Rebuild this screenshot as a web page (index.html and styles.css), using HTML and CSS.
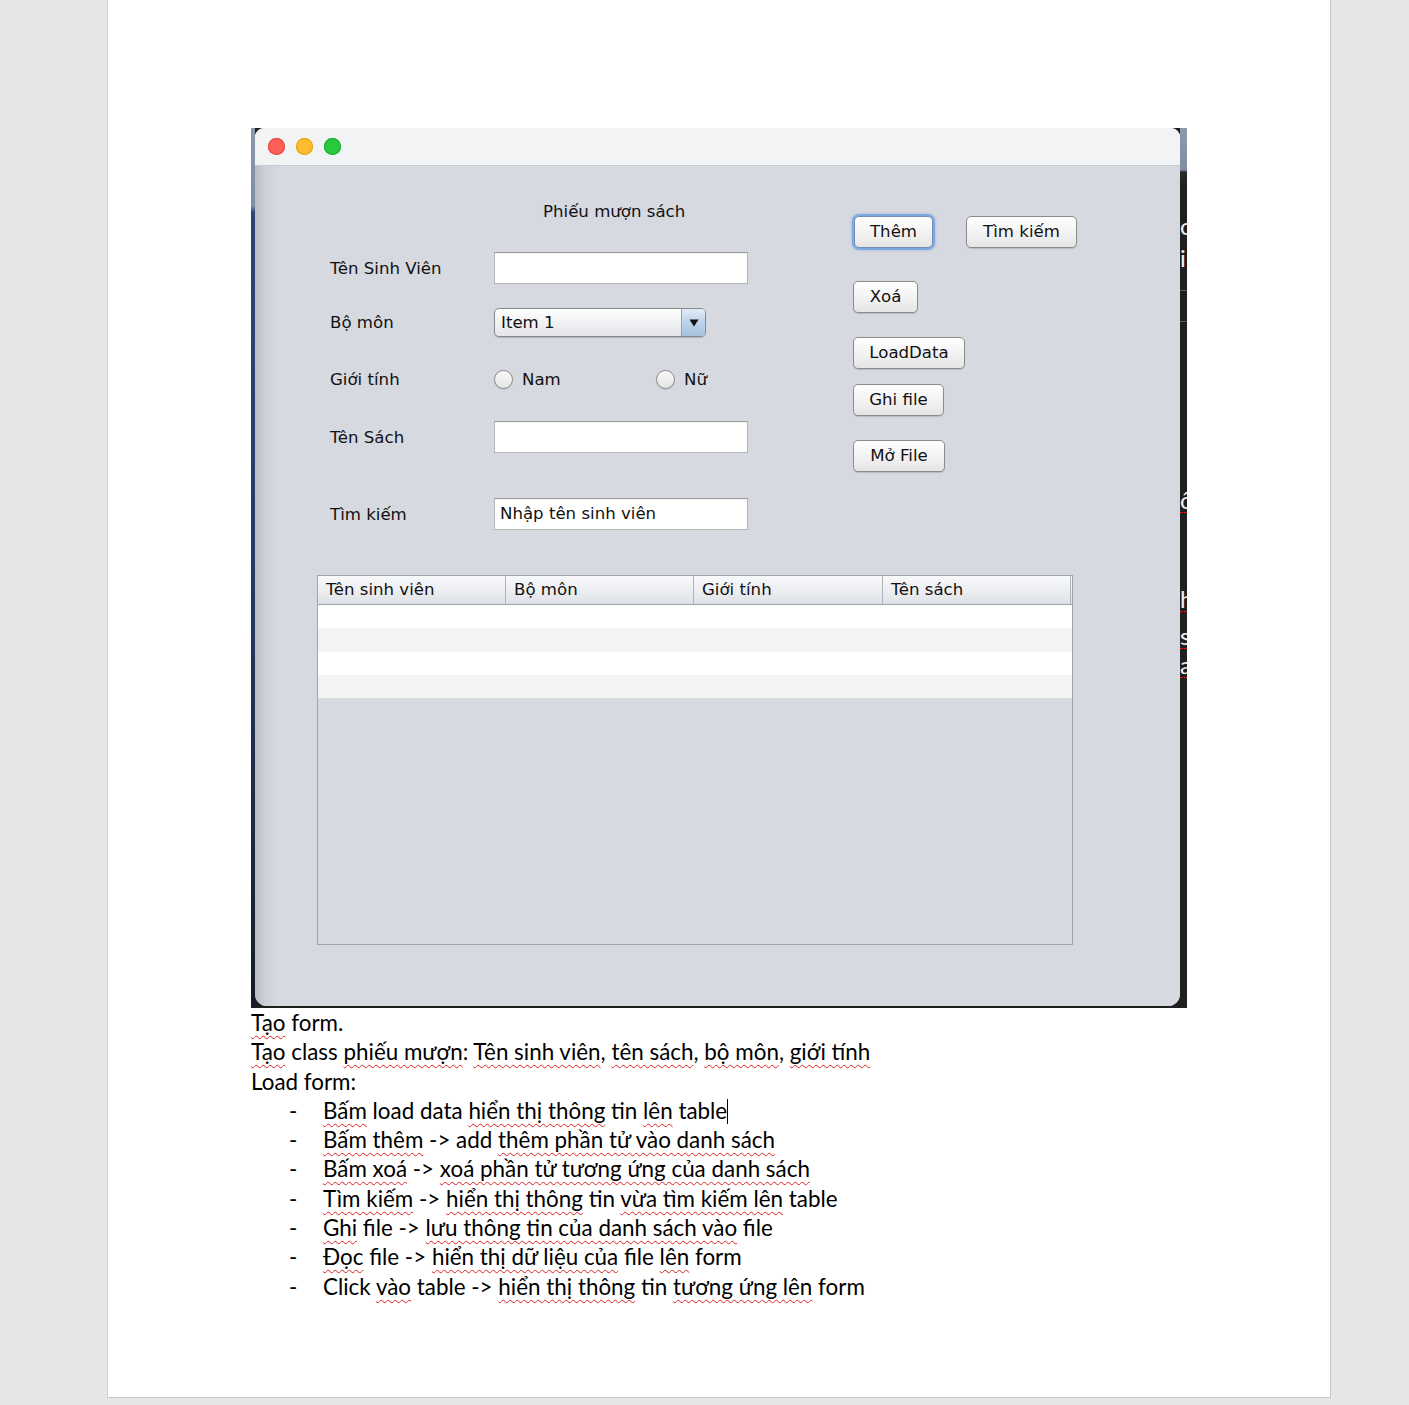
FILE: index.html
```html
<!DOCTYPE html>
<html lang="vi">
<head>
<meta charset="utf-8">
<title>Phiếu mượn sách</title>
<link rel="stylesheet" href="styles.css">
</head>
<body>
<div class="page">
  <div class="shot">
    <div class="desk-left"></div>
    <div class="window">
      <div class="titlebar">
        <span class="tl tl-red"></span><span class="tl tl-yellow"></span><span class="tl tl-green"></span>
      </div>
      <div class="content">
        <div class="top">
          <div class="form">
            <div class="title">Phiếu mượn sách</div>
            <div class="row r1"><span class="label">Tên Sinh Viên</span><div class="field"></div></div>
            <div class="row r2"><span class="label">Bộ môn</span>
              <div class="combo"><span class="combo-text">Item 1</span><span class="combo-arrow"><svg width="10" height="8" viewBox="0 0 10 8"><path d="M0.5 0.5 L9.5 0.5 L5 7.5 Z" fill="#111"/></svg></span></div>
            </div>
            <div class="row r3"><span class="label">Giới tính</span>
              <div class="radios"><span class="radio radio-nam"><span class="dot"></span>Nam</span><span class="radio"><span class="dot"></span>Nữ</span></div>
            </div>
            <div class="row r4"><span class="label">Tên Sách</span><div class="field"></div></div>
            <div class="row r5"><span class="label">Tìm kiếm</span><div class="field">Nhập tên sinh viên</div></div>
          </div>
          <div class="buttons">
            <div class="btn-row"><span class="btn focus w-them">Thêm</span><span class="btn w-tim">Tìm kiếm</span></div>
            <div class="btn-row m-xoa"><span class="btn w-xoa">Xoá</span></div>
            <div class="btn-row m-load"><span class="btn w-load">LoadData</span></div>
            <div class="btn-row m-ghi"><span class="btn w-ghi">Ghi file</span></div>
            <div class="btn-row m-mo"><span class="btn w-mo">Mở File</span></div>
          </div>
        </div>
        <div class="table">
          <div class="thead">
            <span class="th">Tên sinh viên</span><span class="th">Bộ môn</span><span class="th">Giới tính</span><span class="th">Tên sách</span>
          </div>
          <div class="trow h23"></div>
          <div class="trow alt h24"></div>
          <div class="trow h23"></div>
          <div class="trow alt h23"></div>
        </div>
      </div>
    </div>
    <div class="desk-right">
      <span class="frag f1">o</span>
      <span class="frag f2">i</span>
      <span class="bar b1"></span>
      <span class="bar b2"></span>
      <span class="frag f3">ô</span>
      <span class="frag f4">h</span>
      <span class="frag f5">s</span>
      <span class="frag f6">a</span>
    </div>
  </div>
  <div class="notes">
    <p><span class="sp">Tạo</span> form.</p>
    <p><span class="sp">Tạo</span> class <span class="sp">phiếu mượn</span>: <span class="sp">Tên sinh viên</span>, <span class="sp">tên sách</span>, <span class="sp">bộ môn</span>, <span class="sp">giới tính</span></p>
    <p>Load form:</p>
    <ul class="list">
      <li><span class="dash">-</span><span><span class="sp">Bấm</span> load data <span class="sp">hiển thị thông</span> tin <span class="sp">lên</span> table<span class="caret"></span></span></li>
      <li><span class="dash">-</span><span><span class="sp">Bấm thêm</span> -&gt; add <span class="sp">thêm phần tử vào danh sách</span></span></li>
      <li><span class="dash">-</span><span><span class="sp">Bấm xoá</span> -&gt; <span class="sp">xoá phần tử tương ứng của danh sách</span></span></li>
      <li><span class="dash">-</span><span><span class="sp">Tìm kiếm</span> -&gt; <span class="sp">hiển thị thông</span> tin <span class="sp">vừa tìm kiếm lên</span> table</span></li>
      <li><span class="dash">-</span><span><span class="sp">Ghi</span> file -&gt; <span class="sp">lưu thông tin của danh sách vào</span> file</span></li>
      <li><span class="dash">-</span><span><span class="sp">Đọc</span> file -&gt; <span class="sp">hiển thị dữ liệu của</span> file <span class="sp">lên</span> form</span></li>
      <li><span class="dash">-</span><span>Click <span class="sp">vào</span> table -&gt; <span class="sp">hiển thị thông</span> tin <span class="sp">tương ứng lên</span> form</span></li>
    </ul>
  </div>
</div>
</body>
</html>
```
FILE: styles.css
```css
html, body {
  margin: 0;
  padding: 0;
}
body {
  background: #e6e6e6;
  font-family: "DejaVu Sans", sans-serif;
  color: #000;
}
.page {
  box-sizing: border-box;
  margin-left: 107px;
  width: 1224px;
  height: 1398px;
  background: #fff;
  border-left: 1px solid #d0d0d0;
  border-right: 1px solid #c4c4c4;
  border-bottom: 1px solid #c4c4c4;
  padding-top: 128px;
  padding-left: 143px;
}

/* screenshot */
.shot {
  display: flex;
  width: 936px;
  height: 880px;
  background: #1f1f1f;
}
.desk-left {
  width: 4px;
  background: linear-gradient(to bottom, #8898ab 0, #7e90a6 78px, #2e4574 84px, #263b66 420px, #1d2a44 700px, #161b26 100%);
}
.window {
  width: 925px;
  height: 878px;
  background: #d6d9e0;
  border-radius: 9px 9px 12px 12px;
  overflow: hidden;
  display: flex;
  flex-direction: column;
  font-size: 16.6px;
  color: #111;
}
.titlebar {
  height: 37px;
  background: #f2f3f5;
  border-bottom: 1px solid #c7c9cd;
  display: flex;
  align-items: center;
  padding-left: 13px;
  gap: 11px;
}
.tl {
  width: 17px;
  height: 17px;
  border-radius: 50%;
}
.tl-red { background: #fe5f57; box-shadow: inset 0 0 0 1px #e2463f; }
.tl-yellow { background: #febc2e; box-shadow: inset 0 0 0 1px #e1a116; }
.tl-green { background: #28c840; box-shadow: inset 0 0 0 1px #1aab29; }

.content {
  flex: 1;
  padding-left: 62px;
  background: linear-gradient(to right, #b9bdc7 0, #ccd0d8 10px, #d6d9e0 24px);
}
.top {
  display: flex;
}
.form {
  width: 535px;
  padding-top: 36px;
}
.title {
  padding-left: 226px;
  height: 20px;
  line-height: 20px;
}
.row {
  display: flex;
  align-items: center;
  padding-left: 13px;
}
.label {
  width: 164px;
}
.r1 { margin-top: 30px; height: 32px; }
.r2 { margin-top: 24px; height: 29px; }
.r3 { margin-top: 31px; height: 22px; }
.r4 { margin-top: 31px; height: 32px; }
.r5 { margin-top: 45px; height: 32px; }

.field {
  box-sizing: border-box;
  width: 254px;
  height: 32px;
  background: #fff;
  border: 1px solid #b5b5b5;
  border-top-color: #9c9c9c;
  box-shadow: inset 0 1px 1px rgba(0,0,0,0.06);
  padding-left: 5px;
  line-height: 30px;
}
.combo {
  box-sizing: border-box;
  width: 212px;
  height: 29px;
  display: flex;
  border: 1px solid #8a8a8a;
  border-radius: 5px;
  overflow: hidden;
  background: linear-gradient(#ffffff, #f1f2f4 50%, #e3e5e9);
  box-shadow: 0 1px 1px rgba(0,0,0,0.18);
}
.combo-text {
  padding-left: 6px;
  line-height: 27px;
}
.combo-arrow {
  margin-left: auto;
  width: 23px;
  border-left: 1px solid #8ba3bd;
  background: linear-gradient(#e2ecf7, #bcd2e8 50%, #a7c1dd);
  display: flex;
  align-items: center;
  justify-content: center;
}
.radios {
  display: flex;
  align-items: center;
}
.radio {
  display: flex;
  align-items: center;
}
.radio-nam {
  width: 162px;
}
.dot {
  box-sizing: border-box;
  width: 19px;
  height: 19px;
  border-radius: 50%;
  border: 1px solid #8c8c8c;
  background: linear-gradient(#fafafa, #e4e4e4);
  box-shadow: 0 1px 1px rgba(0,0,0,0.12);
  margin-right: 9px;
}

/* buttons */
.buttons {
  padding-top: 50px;
  margin-left: 1px;
}
.btn-row {
  display: flex;
}
.btn {
  box-sizing: border-box;
  height: 32px;
  line-height: 30px;
  text-align: center;
  border: 1px solid #8b8b8b;
  border-radius: 5px;
  background: linear-gradient(#ffffff, #f3f3f3 50%, #e5e5e5);
  box-shadow: 0 1px 1px rgba(0,0,0,0.15);
}
.btn.focus {
  margin-left: 1px;
  border-color: #6f8fb6;
  box-shadow: 0 0 0 2px #7eaadd, 0 0 3px 2px rgba(90,150,220,0.5);
}
.w-them { width: 79px; }
.w-tim { width: 111px; margin-left: 33px; }
.w-xoa { width: 65px; }
.w-load { width: 112px; }
.w-ghi { width: 91px; }
.w-mo { width: 92px; }
.m-xoa { margin-top: 33px; }
.m-load { margin-top: 24px; }
.m-ghi { margin-top: 15px; }
.m-mo { margin-top: 24px; }

/* table */
.table {
  box-sizing: border-box;
  margin-top: 45px;
  width: 756px;
  height: 370px;
  border: 1px solid #a2a4aa;
}
.thead {
  display: grid;
  grid-template-columns: 188px 188px 189px 188px;
  height: 28px;
  border-bottom: 1px solid #9fa2a9;
  background: linear-gradient(#f8f9fb, #eceef1 55%, #dde0e5);
}
.th {
  border-right: 1px solid #b1b4ba;
  padding-left: 8px;
  line-height: 28px;
}
.trow { background: #fff; }
.trow.alt { background: #f3f3f2; }
.h23 { height: 23px; }
.h24 { height: 24px; }

/* right desktop strip */
.desk-right {
  width: 7px;
  overflow: hidden;
  display: flex;
  flex-direction: column;
  background: linear-gradient(to bottom, #8b9aab 0, #7f8fa2 42px, #2a2a2a 44px, #1f1f1f 60px);
  color: #f2f2f2;
  font-family: "Lato", sans-serif;
  font-size: 24px;
  line-height: 24px;
}
.frag { display: block; white-space: nowrap; }
.f1 { margin-top: 86px; }
.f2 { margin-top: 8px; }
.bar { display: block; height: 1px; background: #5a5a5a; }
.b1 { margin-top: 20px; }
.b2 { margin-top: 30px; }
.f3 { margin-top: 166px; border-bottom: 1px dotted #e33; }
.f4 { margin-top: 74px; border-bottom: 1px dotted #e33; }
.f5 { margin-top: 12px; border-bottom: 1px dotted #e33; }
.f6 { margin-top: 4px; border-bottom: 1px dotted #e33; }

/* document notes */
.notes {
  font-family: "Lato", "Open Sans", sans-serif;
  font-size: 22.4px;
  line-height: 29.3px;
  color: #000;
}
.notes p {
  margin: 0;
}
.list {
  list-style: none;
  margin: 0;
  padding: 0;
}
.list li {
  display: flex;
}
.dash {
  width: 34px;
  padding-left: 38px;
}
.sp {
  text-decoration: underline wavy #e02020;
  text-decoration-thickness: 1px;
  text-underline-offset: 4px;
}
.caret {
  display: inline-block;
  width: 1px;
  height: 25px;
  background: #000;
  vertical-align: -5px;
}
```
